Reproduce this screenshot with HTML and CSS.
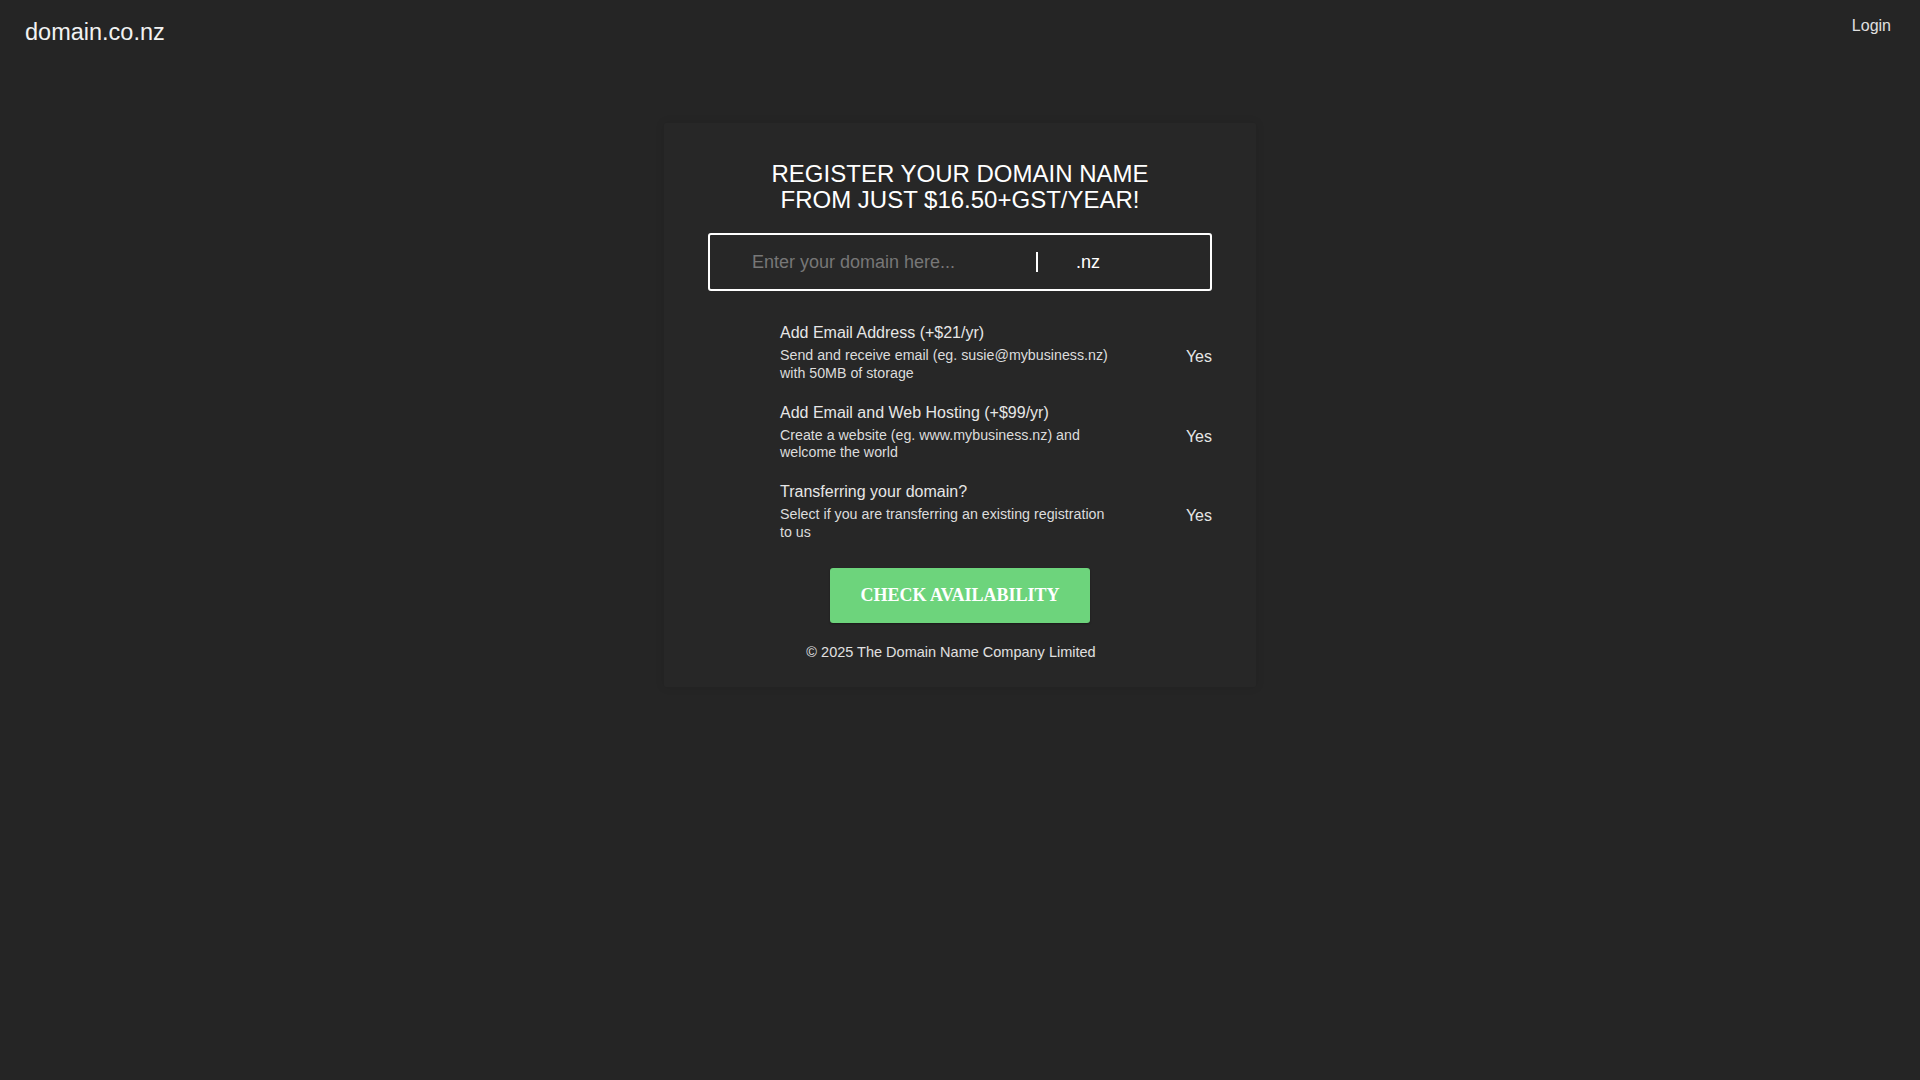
FILE: index.html
```html
<!DOCTYPE html>
<html lang="en">
<head>
<meta charset="utf-8">
<title>domain.co.nz</title>
<link rel="stylesheet" href="styles.css">
</head>
<body>
<header class="topbar">
  <a class="logo" href="#">domain.co.nz</a>
  <a class="login" href="#">Login</a>
</header>
<main class="page">
  <section class="card">
    <h1 class="title">REGISTER YOUR DOMAIN NAME<br>FROM JUST $16.50+GST/YEAR!</h1>
    <div class="search">
      <input class="search-input" type="text" placeholder="Enter your domain here...">
      <span class="divider"></span>
      <span class="suffix">.nz</span>
    </div>
    <div class="options">
      <div class="option">
        <span class="option-check"></span>
        <div class="option-text">
          <div class="option-title">Add Email Address (+$21/yr)</div>
          <div class="option-desc">Send and receive email (eg. susie@mybusiness.nz) with 50MB of storage</div>
        </div>
        <span class="option-yes">Yes</span>
      </div>
      <div class="option">
        <span class="option-check"></span>
        <div class="option-text">
          <div class="option-title">Add Email and Web Hosting (+$99/yr)</div>
          <div class="option-desc">Create a website (eg. www.mybusiness.nz) and welcome the world</div>
        </div>
        <span class="option-yes">Yes</span>
      </div>
      <div class="option">
        <span class="option-check"></span>
        <div class="option-text">
          <div class="option-title">Transferring your domain?</div>
          <div class="option-desc">Select if you are transferring an existing registration to us</div>
        </div>
        <span class="option-yes">Yes</span>
      </div>
    </div>
    <div class="actions">
      <button class="check-btn" type="button">CHECK AVAILABILITY</button>
    </div>
    <p class="copyright">© 2025 The Domain Name Company Limited</p>
  </section>
</main>
</body>
</html>
```

FILE: styles.css
```css
html, body {
  margin: 0;
  padding: 0;
}

body {
  background: #252525;
  color: #e8e8e8;
  font-family: "Liberation Sans", Arial, sans-serif;
  min-height: 1080px;
}

.topbar {
  display: flex;
  justify-content: space-between;
  align-items: flex-start;
  padding: 16px 29px 0 25px;
}

.logo {
  color: #f2f2f2;
  text-decoration: none;
  font-size: 23.5px;
  line-height: 27px;
  margin-top: 3px;
}

.login {
  color: #e0e0e0;
  text-decoration: none;
  font-size: 16px;
  line-height: 18px;
  margin-top: 1px;
}

.page {
  display: flex;
  justify-content: center;
  padding-top: 77px;
}

.card {
  width: 592px;
  box-sizing: border-box;
  padding: 38px 44px 27px;
  background: #272727;
  box-shadow: 0 0 10px rgba(0, 0, 0, 0.1);
  border-radius: 2px;
}

.title {
  margin: 0;
  font-size: 24px;
  line-height: 26px;
  font-weight: normal;
  color: #ffffff;
  text-align: center;
}

.search {
  margin-top: 20px;
  height: 58px;
  box-sizing: border-box;
  border: 2px solid #ffffff;
  border-radius: 3px;
  display: flex;
  align-items: center;
}

.search-input {
  width: 326px;
  box-sizing: border-box;
  padding: 0 0 0 42px;
  border: 0;
  outline: none;
  background: transparent;
  color: #ffffff;
  font-family: "Liberation Sans", Arial, sans-serif;
  font-size: 18px;
  height: 30px;
}

.search-input::placeholder {
  color: #777777;
}

.divider {
  width: 2px;
  height: 20px;
  background: #ffffff;
}

.suffix {
  padding-left: 38px;
  font-size: 18px;
  color: #ffffff;
}

.options {
  margin-top: 33px;
  display: flex;
  flex-direction: column;
  gap: 21.5px;
}

.option {
  display: grid;
  grid-template-columns: 72px 335px 1fr;
  align-items: center;
}

.option-title {
  font-size: 16px;
  line-height: 18px;
  color: #e6e6e6;
}

.option-desc {
  margin-top: 5px;
  font-size: 14.24px;
  line-height: 17.5px;
  color: #dcdcdc;
}

.option-yes {
  margin-top: 8px;
  text-align: right;
  font-size: 16px;
  color: #e6e6e6;
}

.actions {
  margin-top: 26.5px;
  display: flex;
  justify-content: center;
}

.check-btn {
  width: 260px;
  height: 55px;
  border: 0;
  border-radius: 3px;
  background: #6dd47c;
  color: #ffffff;
  font-family: "Liberation Serif", "Times New Roman", serif;
  font-weight: bold;
  font-size: 18px;
  box-shadow: 0 1px 2px rgba(0, 0, 0, 0.35);
  cursor: pointer;
}

.copyright {
  margin: 21px 0 0;
  padding-right: 18px;
  text-align: center;
  font-size: 14.5px;
  color: #e0e0e0;
}
```
